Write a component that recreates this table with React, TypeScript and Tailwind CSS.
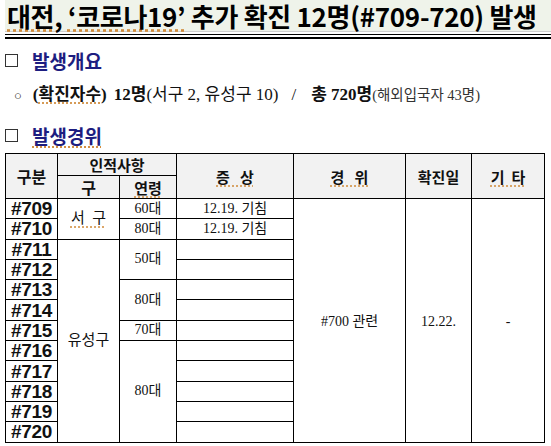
import type { ReactNode } from "react"

const sans = "font-['Noto_Sans_CJK_KR',sans-serif]"
const serif = "font-['Liberation_Serif','Noto_Sans_CJK_KR',serif]"
const narrow = "font-['Liberation_Sans_Narrow','Liberation_Sans','Noto_Sans_CJK_KR',sans-serif]"
const squiggle = "underline decoration-dotted decoration-[#d08a3a] underline-offset-[3px]"

type Row = {
  no: string
  gu?: { text: ReactNode; span: number }
  age?: { text: string; span: number }
  symptom: string
}

const rows: Row[] = [
  { no: "#709", gu: { text: <span className={squiggle}>서&nbsp;&nbsp;구</span>, span: 2 }, age: { text: "60대", span: 1 }, symptom: "12.19. 기침" },
  { no: "#710", age: { text: "80대", span: 1 }, symptom: "12.19. 기침" },
  { no: "#711", gu: { text: "유성구", span: 10 }, age: { text: "50대", span: 2 }, symptom: "" },
  { no: "#712", symptom: "" },
  { no: "#713", age: { text: "80대", span: 2 }, symptom: "" },
  { no: "#714", symptom: "" },
  { no: "#715", age: { text: "70대", span: 1 }, symptom: "" },
  { no: "#716", age: { text: "80대", span: 5 }, symptom: "" },
  { no: "#717", symptom: "" },
  { no: "#718", symptom: "" },
  { no: "#719", symptom: "" },
  { no: "#720", symptom: "" },
]

function Heading({ children }: { children: ReactNode }) {
  return (
    <div className="flex items-center h-[30px] pl-[5px]">
      <span className="inline-block w-[13px] h-[13px] border border-[#333]" />
      <span className={`${sans} ml-[14px] text-[19px] font-bold text-[#1d1d80] leading-none`}>{children}</span>
    </div>
  )
}

export default function App() {
  const th = `${sans} border border-black bg-[#f2f2f2] font-bold text-[15px] text-[#111] leading-none p-0`
  const td = `${serif} border border-black text-[14px] text-[#111] text-center leading-none p-0`

  return (
    <div className="w-[551px] h-[446px] bg-white overflow-hidden">
      {/* 제목 */}
      <div className="ml-[5px] h-[32px] bg-[#eff3ea] border-b border-[#cfcfcf] flex items-center">
        <div className={`${sans} whitespace-nowrap text-[26px] font-bold text-black leading-none pl-[2px] tracking-[-0.3px]`}>
          <span className={squiggle}>대전, ‘코로나19’</span> 추가 확진 12명(#709-720) 발생
        </div>
      </div>
      <div className="ml-[5px] mt-[2px] border-t border-black h-[3px]" />
      <div className="ml-[5px] border-t-2 border-black" />

      {/* 발생개요 */}
      <div className="mt-[6px]">
        <Heading>발생개요</Heading>
      </div>
      <div className={`${serif} flex items-baseline h-[38px] pt-[7px] pl-[14px] text-[17px] text-[#111] whitespace-nowrap`}>
        <span className="text-[13px] mr-[11px]">○</span>
        <span className="font-bold">
          (<span className={squiggle}>확진자수</span>)
        </span>
        <span className="font-bold ml-[7px]">12명</span>
        <span>(서구 2, 유성구 10)</span>
        <span className="ml-[13px]">/</span>
        <span className="font-bold ml-[15px]">총 720명</span>
        <span className="text-[14.5px] text-[#333]">(해외입국자 43명)</span>
      </div>

      {/* 발생경위 */}
      <div className="mt-[7px]">
        <Heading>
          <span className={squiggle}>발생경위</span>
        </Heading>
      </div>

      <table className="ml-[5px] mt-[3px] border-collapse table-fixed w-[539px]">
        <colgroup>
          <col className="w-[52px]" />
          <col className="w-[62px]" />
          <col className="w-[57px]" />
          <col className="w-[117px]" />
          <col className="w-[112px]" />
          <col className="w-[66px]" />
          <col className="w-[73px]" />
        </colgroup>
        <thead>
          <tr className="h-[22px]">
            <th rowSpan={2} className={`${th} text-[16px]`}>구분</th>
            <th colSpan={2} className={th}>인적사항</th>
            <th rowSpan={2} className={th}>
              <span className={squiggle}>증&nbsp;&nbsp;&nbsp;상</span>
            </th>
            <th rowSpan={2} className={th}>
              <span className={squiggle}>경&nbsp;&nbsp;&nbsp;위</span>
            </th>
            <th rowSpan={2} className={th}>확진일</th>
            <th rowSpan={2} className={th}>
              <span className={squiggle}>기&nbsp;&nbsp;타</span>
            </th>
          </tr>
          <tr className="h-[23px]">
            <th className={`${th} text-[16px]`}>구</th>
            <th className={th}>
              <span className={squiggle}>연령</span>
            </th>
          </tr>
        </thead>
        <tbody>
          {rows.map((r, i) => (
            <tr key={r.no} className="h-[20.3px]">
              <td className={`${narrow} border border-black text-[19px] font-bold text-[#111] text-center leading-none p-0 tracking-[-0.3px]`}>
                {r.no}
              </td>
              {r.gu && (
                <td rowSpan={r.gu.span} className={`${td} text-[15px]`}>
                  {r.gu.text}
                </td>
              )}
              {r.age && (
                <td rowSpan={r.age.span} className={td}>
                  {r.age.text}
                </td>
              )}
              <td className={td}>{r.symptom}</td>
              {i === 0 && (
                <>
                  <td rowSpan={12} className={`${td} align-top pt-[116px]`}>#700 관련</td>
                  <td rowSpan={12} className={`${td} align-top pt-[116px]`}>12.22.</td>
                  <td rowSpan={12} className={`${td} align-top pt-[116px]`}>-</td>
                </>
              )}
            </tr>
          ))}
        </tbody>
      </table>
    </div>
  )
}
